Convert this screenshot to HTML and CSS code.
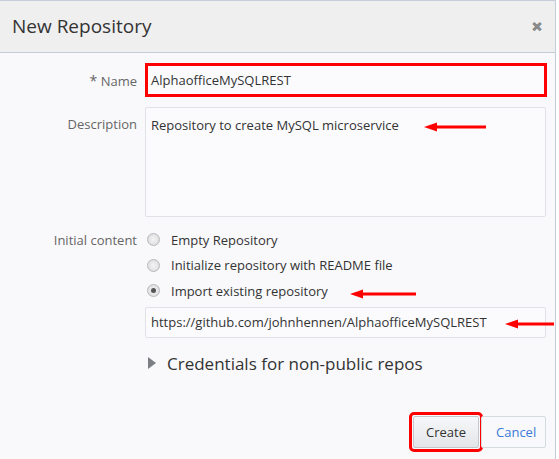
FILE: index.html
```html
<!DOCTYPE html>
<html>
<head>
<meta charset="utf-8">
<link rel="stylesheet" href="styles.css">
</head>
<body>
<div class="dialog">
  <div class="header">
    <span class="title">New Repository</span>
    <span class="close">&#x2715;</span>
  </div>
  <div class="body">
    <div class="form">
      <label class="lbl lbl-name"><span class="req">*</span> Name</label>
      <div class="field"><div class="input input-name">AlphaofficeMySQLREST</div></div>

      <label class="lbl lbl-desc">Description</label>
      <div class="field"><div class="textarea">Repository to create MySQL microservice</div></div>

      <label class="lbl lbl-init">Initial content</label>
      <div class="field radios">
        <div class="radio"><span class="dot"></span><span>Empty Repository</span></div>
        <div class="radio"><span class="dot"></span><span>Initialize repository with README file</span></div>
        <div class="radio"><span class="dot on"></span><span>Import existing repository</span></div>
        <div class="input input-url">https://github.com/johnhennen/AlphaofficeMySQLREST</div>
        <div class="cred"><span class="tri"></span><span>Credentials for non-public repos</span></div>
      </div>
    </div>
    <div class="footer">
      <div class="create-wrap"><button class="btn">Create</button></div>
      <button class="btn link">Cancel</button>
    </div>
  </div>
  <svg class="arrow a1" width="64" height="10" viewBox="0 0 64 10"><path d="M12 5H63" stroke="#f00" stroke-width="3"/><path d="M1 5L14 0.5V9.5Z" fill="#f00"/></svg>
  <svg class="arrow a2" width="68" height="10" viewBox="0 0 68 10"><path d="M12 5H67" stroke="#f00" stroke-width="3"/><path d="M1 5L14 0.5V9.5Z" fill="#f00"/></svg>
  <svg class="arrow a3" width="50" height="10" viewBox="0 0 50 10"><path d="M12 5H50" stroke="#f00" stroke-width="3"/><path d="M1 5L14 0.5V9.5Z" fill="#f00"/></svg>
</div>
</body>
</html>
```
FILE: styles.css
```css
html, body {
  margin: 0;
  padding: 0;
  background: #ffffff;
}
body {
  font-family: "Open Sans", "Noto Sans", sans-serif;
  color: #333;
}
.dialog {
  position: relative;
  width: 556px;
  height: 459px;
  background: #f9f9fb;
  border-top: 1px solid #c5ced8;
  border-right: 1px solid #c5ced8;
  box-sizing: border-box;
}
.header {
  height: 52px;
  background: #efefef;
  border-bottom: 1px solid #c5ced8;
  box-sizing: border-box;
  display: flex;
  align-items: center;
  justify-content: space-between;
  padding: 0 13px 0 12px;
}
.title {
  font-size: 19px;
  color: #333;
  margin-top: -2px;
}
.close {
  font-size: 12px;
  font-weight: bold;
  color: #8a8a8a;
  -webkit-text-stroke: 1.2px #8a8a8a;
}
.body {
  padding: 10px 9px 0 0;
}
.form {
  display: grid;
  grid-template-columns: 137px 402px;
  column-gap: 8px;
  row-gap: 10px;
  align-items: start;
}
.lbl {
  text-align: right;
  font-size: 13px;
  color: #666;
}
.lbl-name { padding-top: 8px; }
.lbl-desc { padding-top: 8px; }
.lbl-init { padding-top: 4px; }
.req { color: #666; font-size: 14px; }
.input {
  height: 31px;
  box-sizing: border-box;
  border: 1px solid #dfe3e8;
  border-radius: 2px;
  background: #fbfbfe;
  font-size: 13px;
  color: #333;
  display: flex;
  align-items: center;
  padding-left: 5px;
}
.input-name {
  height: 34px;
  border: 3px solid #ff0000;
  border-radius: 0;
  padding-left: 3px;
}
.textarea {
  height: 110px;
  box-sizing: border-box;
  border: 1px solid #dfe3e8;
  border-radius: 2px;
  background: #fbfbfe;
  font-size: 13px;
  padding: 8px 5px;
  width: 401px;
}
.input-url { width: 401px; margin-top: 3px; }
.radios {
  display: flex;
  flex-direction: column;
}
.radio {
  display: flex;
  align-items: center;
  height: 25.5px;
  font-size: 13px;
  color: #333;
}
.dot {
  width: 11px;
  height: 11px;
  border: 1px solid #b5b8bc;
  border-radius: 50%;
  background: radial-gradient(circle, #f4f4f4 0%, #d8d8d8 100%);
  margin: 0 11px 0 2px;
  position: relative;
  box-sizing: content-box;
}
.dot.on::after {
  content: "";
  position: absolute;
  left: 3px;
  top: 3px;
  width: 5px;
  height: 5px;
  border-radius: 50%;
  background: #555;
}
.cred {
  display: flex;
  align-items: center;
  margin-top: 14px;
  font-size: 17px;
  color: #333;
}
.tri {
  width: 0;
  height: 0;
  border-top: 6px solid transparent;
  border-bottom: 6px solid transparent;
  border-left: 8px solid #7b7f84;
  margin: 0 11px 0 3px;
}
.footer {
  display: flex;
  justify-content: flex-end;
  margin-top: 41px;
}
.create-wrap {
  border: 3px solid #ff0000;
  border-radius: 5px;
  padding: 1px;
  margin-top: -4px;
  margin-bottom: -4px;
  margin-right: -2px;
  display: flex;
}
.btn {
  height: 32px;
  box-sizing: border-box;
  font-family: "Open Sans", "Noto Sans", sans-serif;
  font-size: 13px;
  color: #333;
  border: 1px solid #c4c8cc;
  border-radius: 2px;
  background: linear-gradient(#f6f7f8, #e3e6e9);
  padding: 0 12px;
}
.btn.link {
  background: #f9f9fb;
  color: #3b7ad6;
  border-color: #d5dade;
  padding: 0 14px;
  width: 65px;
}
.arrow {
  position: absolute;
}
.a1 { left: 423px; top: 121px; }
.a2 { left: 349px; top: 288px; }
.a3 { left: 504px; top: 318px; }
```
